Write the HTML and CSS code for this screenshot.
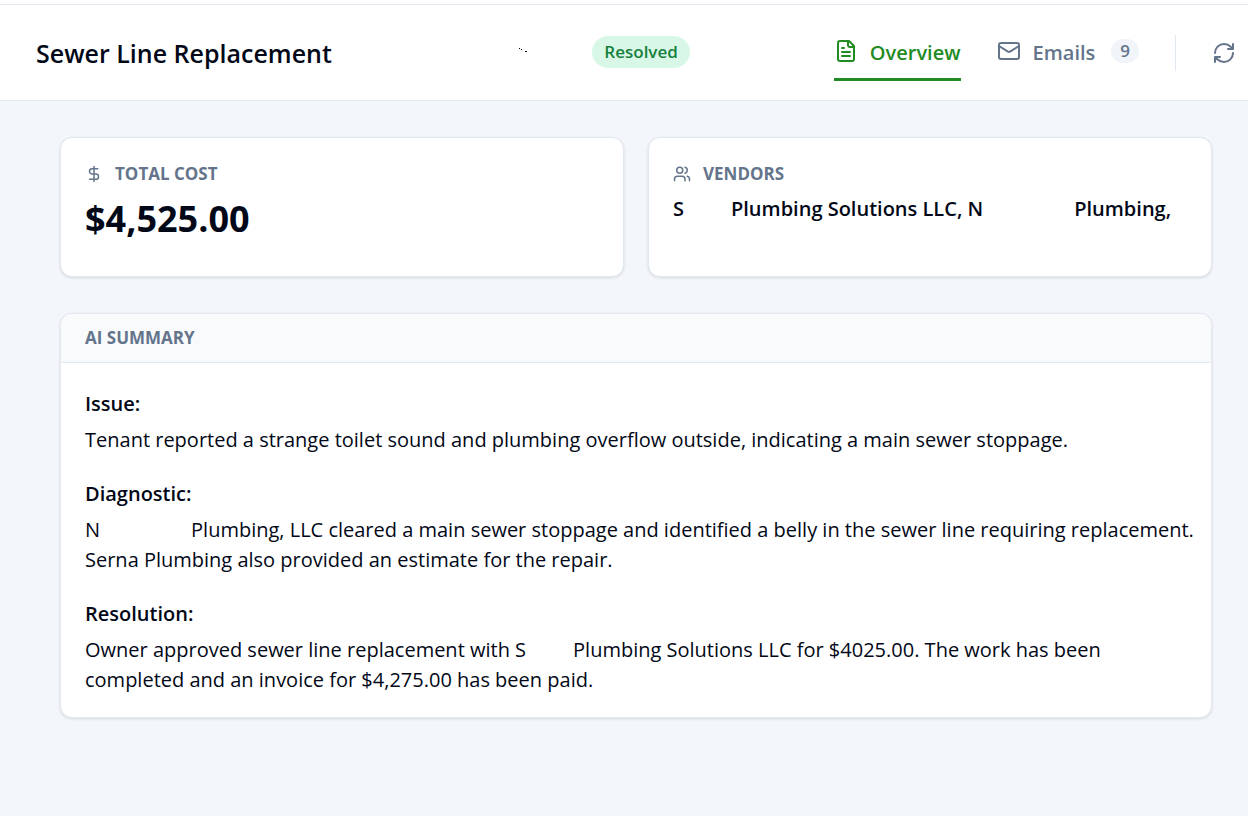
FILE: index.html
```html
<!DOCTYPE html>
<html lang="en">
<head>
  <meta charset="UTF-8">
  <meta name="viewport" content="width=device-width, initial-scale=1.0">
  <title>Sewer Line Replacement</title>
  <link rel="stylesheet" href="styles.css">
</head>
<body>

  <header class="header">
    <h1 class="title">Sewer Line Replacement</h1>
    <svg class="specks" viewBox="0 0 10 5" aria-hidden="true">
      <path d="M1 0h1v1H1zM3 1h1v1H3zM7 3h2v1H7z"/>
    </svg>
    <span class="status">Resolved</span>

    <nav class="tabs">
      <button class="tab active" type="button">
        <svg class="icon" viewBox="0 0 24 24" aria-hidden="true">
          <path d="M15 2H6a2 2 0 0 0-2 2v16a2 2 0 0 0 2 2h12a2 2 0 0 0 2-2V7Z"/>
          <path d="M14 2v4a2 2 0 0 0 2 2h4M10 9H8M16 13H8M16 17H8"/>
        </svg>
        Overview
      </button>
      <button class="tab" type="button">
        <svg class="icon" viewBox="0 0 24 24" aria-hidden="true">
          <rect x="2" y="4" width="20" height="16" rx="2"/>
          <path d="m22 7-8.970 5.700a1.940 1.940 0 0 1-2.060 0L2 7"/>
        </svg>
        Emails
        <span class="count">9</span>
      </button>
    </nav>

    <button class="refresh" type="button" aria-label="Refresh">
      <svg class="icon" viewBox="0 0 24 24" aria-hidden="true">
        <path d="M3 12a9 9 0 0 1 9-9 9.750 9.750 0 0 1 6.740 2.740L21 8M21 3v5h-5"/>
        <path d="M21 12a9 9 0 0 1-9 9 9.750 9.750 0 0 1-6.740-2.740L3 16M8 16H3v5"/>
      </svg>
    </button>
  </header>

  <main class="content">
    <div class="cards">
      <section class="card stat">
        <h2 class="label">
          <svg class="icon small" viewBox="0 0 24 24" aria-hidden="true">
            <path d="M12 2v20M17 5H9.500a3.500 3.500 0 0 0 0 7h5a3.500 3.500 0 0 1 0 7H6"/>
          </svg>
          TOTAL COST
        </h2>
        <p class="cost">$4,525.00</p>
      </section>
      <section class="card stat">
        <h2 class="label">
          <svg class="icon small" viewBox="0 0 24 24" aria-hidden="true">
            <path d="M16 21v-2a4 4 0 0 0-4-4H6a4 4 0 0 0-4 4v2M22 21v-2a4 4 0 0 0-3-3.870M16 3.130a4 4 0 0 1 0 7.750"/>
            <circle cx="9" cy="7" r="4"/>
          </svg>
          VENDORS
        </h2>
        <p class="vendors">S<span class="blank short"></span>Plumbing Solutions LLC, N<span class="blank long"></span>Plumbing,</p>
      </section>
    </div>

    <section class="card summary">
      <h2 class="label summary-head">AI SUMMARY</h2>
      <div class="summary-body">
        <div>
          <h3>Issue:</h3>
          <p>Tenant reported a strange toilet sound and plumbing overflow outside, indicating a main sewer stoppage.</p>
        </div>
        <div>
          <h3>Diagnostic:</h3>
          <p>N<span class="blank long"></span>Plumbing, LLC cleared a main sewer stoppage and identified a belly in the sewer line requiring replacement. Serna Plumbing also provided an estimate for the repair.</p>
        </div>
        <div>
          <h3>Resolution:</h3>
          <p>Owner approved sewer line replacement with S<span class="blank short"></span>Plumbing Solutions LLC for $4025.00. The work has been completed and an invoice for $4,275.00 has been paid.</p>
        </div>
      </div>
    </section>
  </main>

</body>
</html>
```

FILE: styles.css
```css
* {
  box-sizing: border-box;
}

body {
  margin: 0;
  padding-top: 4px;
  min-height: 100vh;
  background: linear-gradient(#fff 4px, #f3f7fc 4px);
  color: #020817;
  font-family: "Open Sans", "Noto Sans", sans-serif;
  font-size: 20px;
  line-height: 30px;
}

h1, h2, h3, p {
  margin: 0;
}

button {
  padding: 0;
  border: none;
  background: none;
  color: #64748b;
  font: inherit;
  cursor: pointer;
}

.icon {
  width: 24px;
  height: 24px;
  flex: none;
  fill: none;
  stroke: currentColor;
  stroke-width: 2;
  stroke-linecap: round;
  stroke-linejoin: round;
}

.icon.small {
  width: 18px;
  height: 18px;
}

/* header */
.header {
  display: flex;
  align-items: center;
  height: 97px;
  padding: 0 12px 0 36px;
  background: #fff;
  border-top: 1px solid #e2e8f0;
  border-bottom: 1px solid #e2e8f0;
}

.title {
  font-size: 25px;
  font-weight: 600;
  line-height: 36px;
}

.specks {
  width: 10px;
  height: 5px;
  margin-left: auto;
  margin-bottom: 4px;
  fill: #020817;
}

.status {
  margin-left: 64px;
  margin-bottom: 2px;
  padding: 1px 12px;
  border-radius: 16px;
  background: #d9f7e6;
  color: #15803d;
  font-size: 17px;
  font-weight: 600;
}

.tabs {
  display: flex;
  gap: 36px;
  margin-left: 144px;
  padding-right: 36px;
  border-right: 1px solid #e2e8f0;
  height: 36px;
  align-items: center;
}

.tab {
  display: flex;
  align-items: center;
  gap: 12px;
  height: 56px;
  border-top: 3px solid transparent;
  border-bottom: 3px solid transparent;
  font-weight: 600;
}

.tab .icon,
.count {
  margin-bottom: 4px;
}

.tab.active {
  border-bottom-color: #228b22;
  color: #228b22;
}

.count {
  margin-left: 4px;
  padding: 0 9px;
  border-radius: 12px;
  background: #f1f5f9;
  font-size: 17px;
  line-height: 24px;
}

.refresh {
  display: flex;
  margin-left: 36px;
}

/* cards */
.content {
  padding: 36px 36px 36px 60px;
}

.cards {
  display: grid;
  grid-template-columns: 1fr 1fr;
  gap: 24px;
  margin-bottom: 36px;
}

.card {
  background: #fff;
  border: 1px solid #e2e8f0;
  border-radius: 12px;
  box-shadow: 0 1px 3px rgba(0, 0, 0, 0.12);
  overflow: hidden;
}

.stat {
  padding: 24px;
}

.label {
  display: flex;
  align-items: center;
  gap: 12px;
  color: #64748b;
  font-size: 17px;
  font-weight: 700;
  line-height: 24px;
}

.cost {
  margin-top: 6px;
  font-size: 36px;
  font-weight: 700;
  line-height: 54px;
}

.vendors {
  height: 58px;
  margin-top: 8px;
  font-weight: 600;
}

/* names that are left out */
.blank {
  display: inline-block;
}

.blank.short {
  width: 47px;
}

.blank.long {
  width: 91px;
}

/* summary */
.summary-head {
  padding: 12px 24px;
  background: #f8fafc;
  border-bottom: 1px solid #e2e8f0;
}

.summary-body {
  display: flex;
  flex-direction: column;
  gap: 24px;
  padding: 26px 12px 22px 24px;
}

h3 {
  margin-bottom: 6px;
  font-size: 20px;
  font-weight: 600;
}
```
